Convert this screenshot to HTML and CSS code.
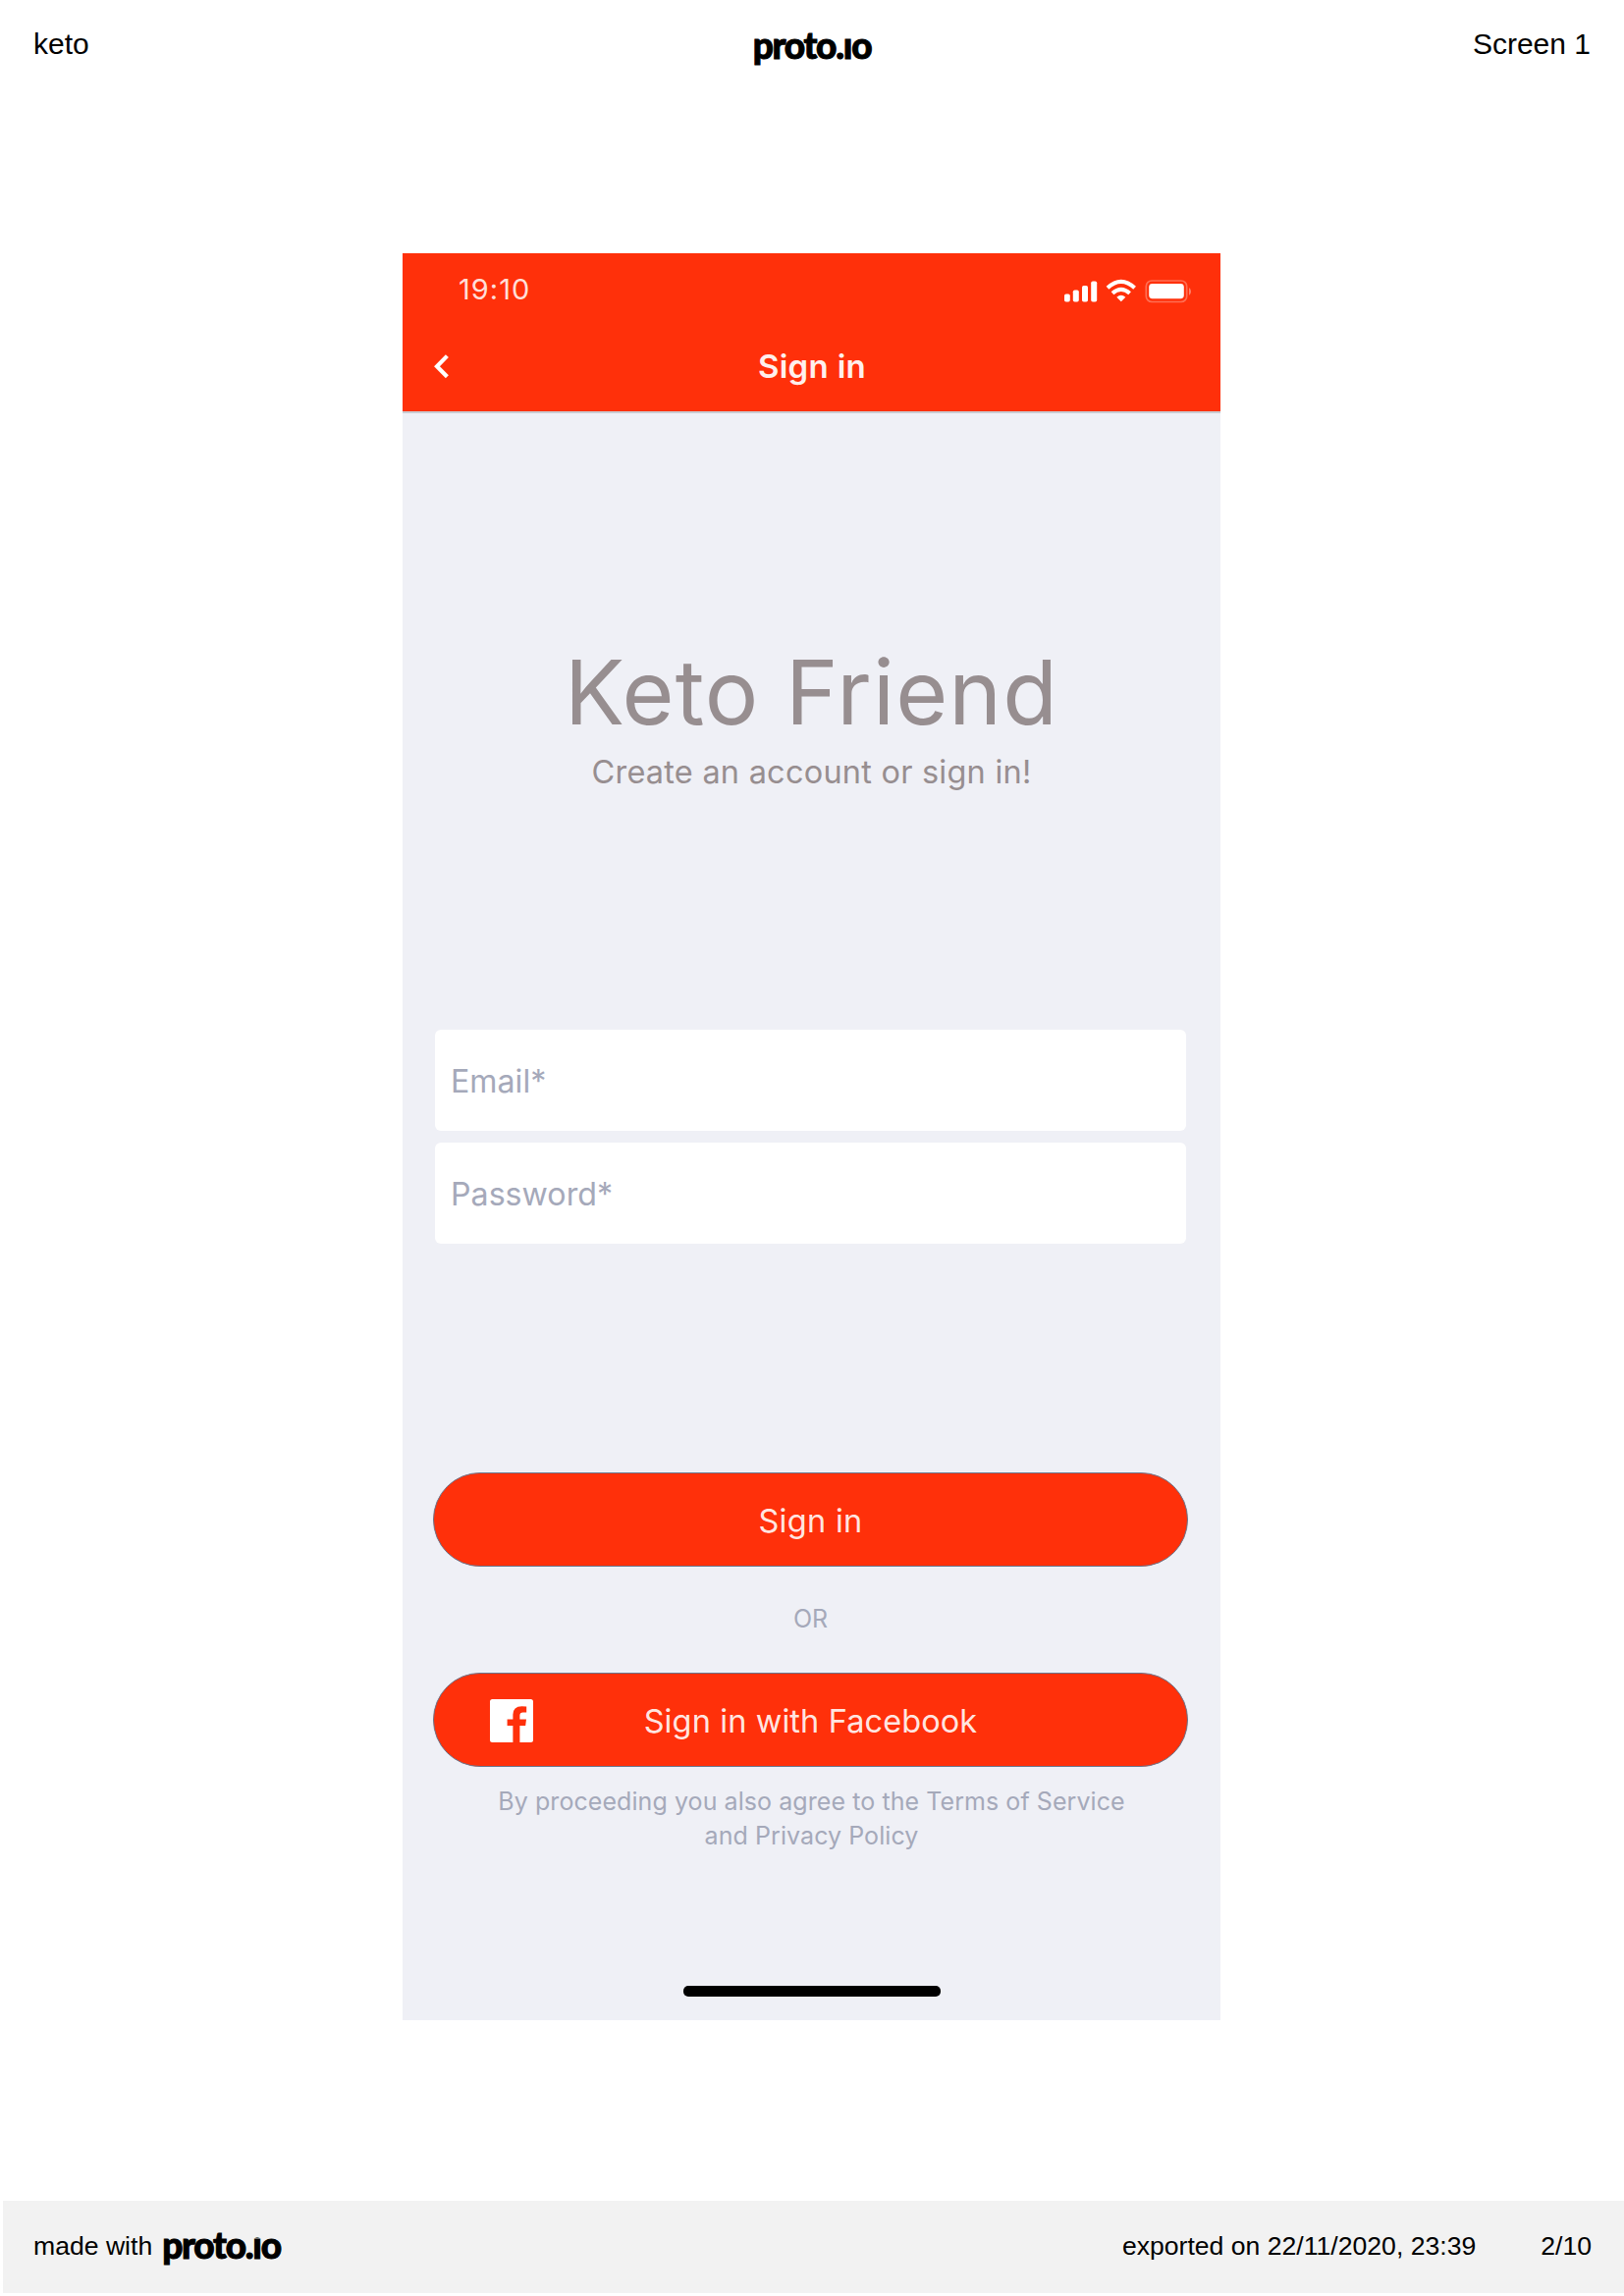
FILE: index.html
```html
<!DOCTYPE html>
<html lang="en">
<head>
<meta charset="utf-8">
<title>keto – Screen 1</title>
<link rel="stylesheet" href="styles.css">
</head>
<body>
<div class="page">
  <header class="page-header">
    <span>keto</span>
    <span class="brand">proto.<span class="brand-i">i</span>o</span>
    <span class="screen-name">Screen 1</span>
  </header>

  <main class="phone">
    <div class="status-bar">
      <span class="time">19:10</span>
      <svg class="status-icons" width="132" height="26" viewBox="0 0 132 26" fill="#fff">
        <rect x="1" y="15.5" width="5.8" height="8" rx="1.8"/>
        <rect x="9.8" y="11.5" width="6" height="12" rx="1.8"/>
        <rect x="19" y="7" width="6" height="16.5" rx="1.8"/>
        <rect x="28.2" y="2.5" width="6" height="21" rx="1.8"/>
        <g fill="none" stroke="#fff" stroke-width="4">
          <path d="M45 9.2Q58.8-3.6 72.6 9.2"/>
          <path d="M50 14.8Q58.8 6.8 67.6 14.8"/>
        </g>
        <path d="M54.3 18.8Q58.8 14.8 63.3 18.8L58.8 23.3Z"/>
        <rect x="84.3" y="2" width="41.4" height="21.5" rx="5.8" fill="none" stroke="#fff" stroke-opacity=".3" stroke-width="1.7"/>
        <rect x="87.2" y="5" width="35.6" height="15.2" rx="3.4"/>
        <path d="M128 9v8q2-1.5 2-4t-2-4Z" opacity=".4"/>
      </svg>
    </div>
    <nav class="nav-bar">
      <svg class="back" width="18" height="28" viewBox="0 0 18 28" fill="none" stroke="#fff" stroke-width="4.2">
        <path d="M15.4 3.6L5 14.2L15.4 24.8"/>
      </svg>
      <h1 class="nav-title">Sign in</h1>
    </nav>

    <section class="intro">
      <h2 class="app-name">Keto Friend</h2>
      <p class="tagline">Create an account or sign in!</p>
    </section>

    <form class="form">
      <div class="fields">
        <div class="field">Email*</div>
        <div class="field">Password*</div>
      </div>
      <div class="button">Sign in</div>
      <div class="divider">OR</div>
      <div class="button">
        <svg class="facebook" width="44" height="44" viewBox="0 0 44 44" fill="#fff">
          <path d="M2.5 0H41.5Q44 0 44 2.5V41.5Q44 44 41.5 44H30.4V27H36.2L37 20.5H30.4V16.5Q30.4 13.5 33.6 13.5H37.2V7.5Q35.3 7.2 32.4 7.2Q23.4 7.2 23.4 15.8V20.5H17.6V27H23.4V44H2.5Q0 44 0 41.5V2.5Q0 0 2.5 0Z"/>
        </svg>
        <span class="facebook-label">Sign in with Facebook</span>
      </div>
      <p class="legal">By proceeding you also agree to the Terms of Service<br>and Privacy Policy</p>
    </form>
    <div class="home-indicator"></div>
  </main>

  <footer class="page-footer">
    <span>made with</span>
    <span class="brand">proto.<span class="brand-i">i</span>o</span>
    <span class="exported">exported on 22/11/2020, 23:39</span>
    <span>2/10</span>
  </footer>
</div>
</body>
</html>
```
FILE: styles.css
```css
* { box-sizing: border-box; }
body {
  margin: 0;
  background: #fff;
  color: #000;
  font-family: "Liberation Sans", Arial, sans-serif;
}
h1, h2, p { margin: 0; font-weight: 400; }
svg { display: block; flex: none; }

.page {
  display: flex;
  flex-direction: column;
  width: 1654px;
  height: 2339px;
  padding-bottom: 3px;
}
.page-header {
  display: grid;
  grid-template-columns: 1fr auto 1fr;
  align-items: center;
  height: 90px;
  padding: 0 34px;
  font-size: 30px;
}
.screen-name { text-align: right; }

.brand {
  font-family: Lato, sans-serif;
  font-weight: 900;
  font-size: 37px;
  line-height: 60px;
  letter-spacing: -1.25px;
  padding-top: 2px;
  -webkit-text-stroke: 1px #000;
}
/* dotless i of the wordmark */
.brand-i {
  display: inline-block;
  clip-path: inset(23px -2px 0 -2px);
}

.phone {
  display: flex;
  flex-direction: column;
  width: 833px;
  height: 1800px;
  margin: 168px 0 0 410px;
  background: #eff0f6;
  font-family: Inter, sans-serif;
}
.status-bar {
  display: flex;
  align-items: center;
  justify-content: space-between;
  height: 68px;
  padding: 5px 28px 0 57px;
  background: #ff300a;
  color: rgba(255, 255, 255, .85);
}
.time { font-size: 29px; letter-spacing: 1px; }
.status-icons { margin-top: 4px; }
.nav-bar {
  display: grid;
  grid-template-columns: 50px 1fr 50px;
  align-items: center;
  height: 95px;
  padding: 0 29px 0 30px;
  background: #ff300a;
  border-bottom: 2px solid #c9ccd2;
  color: #fff;
}
.nav-title {
  text-align: center;
  font-size: 33px;
  font-weight: 600;
  letter-spacing: .3px;
  opacity: .93;
}

.intro { margin-top: 234px; text-align: center; color: #978e90; }
.app-name { font-size: 91px; line-height: 100px; letter-spacing: 1.1px; }
.tagline { margin-top: 12px; font-size: 32.5px; line-height: 40px; letter-spacing: .22px; }

.form {
  display: flex;
  flex-direction: column;
  margin: 242px 33px 0 31px;
  color: #a5a9ba;
}
.fields { display: flex; flex-direction: column; gap: 12px; margin: 0 2px 233px; }
.field {
  display: flex;
  align-items: center;
  height: 103px;
  padding: 2px 0 0 16px;
  border-radius: 6px;
  background: #fff;
  font-size: 32.2px;
}
.button {
  display: flex;
  align-items: center;
  justify-content: center;
  height: 96px;
  padding-top: 2px;
  border: 1.5px solid #68758c;
  border-radius: 48px;
  background: #ff300a;
  color: rgba(255, 255, 255, .9);
  font-size: 32.5px;
  letter-spacing: .3px;
}
.facebook { margin-left: 57px; }
.facebook-label {
  flex: 1;
  padding-right: 101px;
  text-align: center;
  letter-spacing: .1px;
}
.divider {
  height: 108px;
  line-height: 106px;
  text-align: center;
  font-size: 25px;
}
.legal {
  margin-top: 18px;
  padding-left: 2px;
  text-align: center;
  font-size: 25px;
  line-height: 35px;
  letter-spacing: .07px;
}
.home-indicator {
  width: 262px;
  height: 11px;
  margin: auto 0 24px 286px;
  border-radius: 5px;
  background: #000;
}

.page-footer {
  display: flex;
  align-items: center;
  height: 94px;
  margin: auto 0 0 3px;
  padding: 0 33px 2px 31px;
  background: #f2f2f2;
  font-size: 26.6px;
}
.page-footer .brand { margin-left: 10px; padding: 0 0 3px; }
.exported { margin: 0 66px 0 auto; }
```
